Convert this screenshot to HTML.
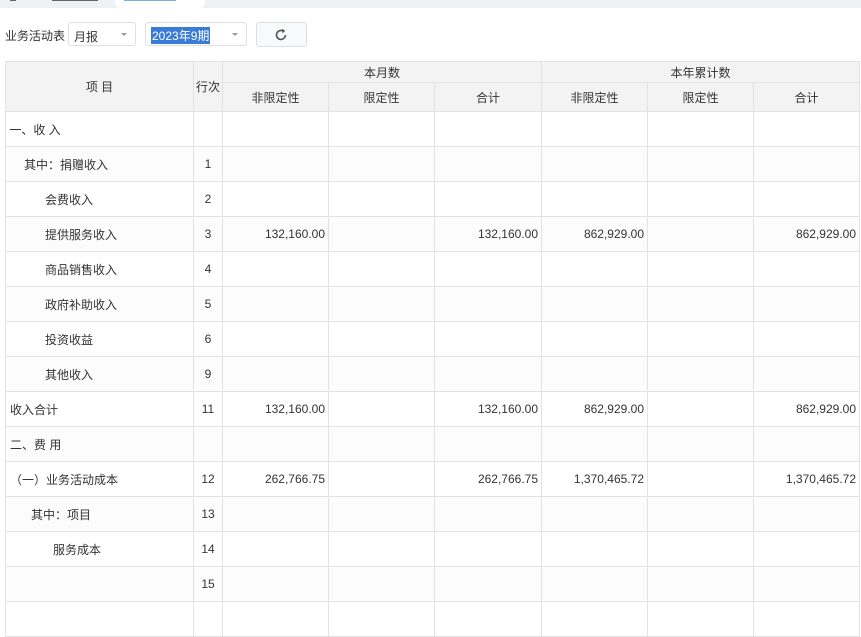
<!DOCTYPE html><html><head><meta charset="utf-8"><style>
body{margin:0;width:861px;height:605px;overflow:hidden;background:#fff;font-family:"Liberation Sans","Noto Sans CJK SC",sans-serif;font-size:12px;color:#333;position:relative}
.strip{position:absolute;left:0;top:0;width:861px;height:8px;background:#edf1f4}
.tab{position:absolute;left:115px;top:0;width:90px;height:8px;background:#fff;border-radius:0 0 6px 6px}
.tab2{position:absolute;left:0;top:0;width:113px;height:7px;background:#edf1f4;border-radius:0 0 6px 0}
.t1{position:absolute;left:10px;top:0;width:6px;height:1px;background:#666}
.t2{position:absolute;left:52px;top:0;width:46px;height:1px;background:#666}
.t3{position:absolute;left:124px;top:0;width:52px;height:1px;background:#7aaee8}
.lbl{position:absolute;left:5px;top:27px;font-size:12px}
.sel{position:absolute;top:22px;height:24px;border:1px solid #dcdfe6;border-radius:3px;box-sizing:border-box;background:#fff}
.sel span{position:absolute;left:5px;top:5px}
.sel i{position:absolute;right:8px;top:10px;border:3px solid transparent;border-top:3px solid #999;border-bottom:0}
.btn{position:absolute;left:256px;top:22px;width:51px;height:25px;border:1px solid #dcdfe6;border-radius:3px;box-sizing:border-box;background:#f7f9fb}
table{position:absolute;left:5px;top:61px;border-collapse:collapse;table-layout:fixed}
td{border:1px solid #e3e3e3;height:34px;padding:0;font-size:12px;white-space:nowrap}
.h td{background:#f3f3f3;text-align:center;height:20px}
tr.b td:nth-child(n+3){text-align:right;padding-right:3px}
tr.b td:nth-child(2){text-align:center}
tr.b:nth-child(even) td{background:#fcfcfc}
</style></head><body>
<div class="strip"></div><div class="tab2"></div><div class="tab"></div><div class="t1"></div><div class="t2"></div><div class="t3"></div>
<div class="lbl">业务活动表</div>
<div class="sel" style="left:68px;width:68px"><span>月报</span><i></i></div>
<div class="sel" style="left:145px;width:102px"><span style="background:#3b7bd8;color:#fff;top:4px;padding:0 1px">2023年9期</span><i></i></div>
<div class="btn"><svg width="14" height="14" viewBox="0 0 14 14" style="position:absolute;left:17px;top:5px"><path d="M11.5 7A4.5 4.5 0 1 1 9.2 3" fill="none" stroke="#555" stroke-width="1.6"/><path d="M8 0.8L11.2 2.8 8.6 5.4Z" fill="#555"/></svg></div>
<table>
<colgroup><col style="width:188px"><col style="width:29px"><col style="width:106px"><col style="width:106px"><col style="width:107px"><col style="width:106px"><col style="width:106px"><col style="width:106px"></colgroup>
<tr class="h"><td rowspan="2" style="height:49px">项 目</td><td rowspan="2">行次</td><td colspan="3">本月数</td><td colspan="3">本年累计数</td></tr>
<tr class="h"><td style="height:28px">非限定性</td><td>限定性</td><td>合计</td><td>非限定性</td><td>限定性</td><td>合计</td></tr>
<tr class="b"><td>&nbsp;一、收 入</td><td></td><td></td><td></td><td></td><td></td><td></td><td></td></tr>
<tr class="b"><td style="padding-left:18px">其中：捐赠收入</td><td>1</td><td></td><td></td><td></td><td></td><td></td><td></td></tr>
<tr class="b"><td style="padding-left:39px">会费收入</td><td>2</td><td></td><td></td><td></td><td></td><td></td><td></td></tr>
<tr class="b"><td style="padding-left:39px">提供服务收入</td><td>3</td><td>132,160.00</td><td></td><td>132,160.00</td><td>862,929.00</td><td></td><td>862,929.00</td></tr>
<tr class="b"><td style="padding-left:39px">商品销售收入</td><td>4</td><td></td><td></td><td></td><td></td><td></td><td></td></tr>
<tr class="b"><td style="padding-left:39px">政府补助收入</td><td>5</td><td></td><td></td><td></td><td></td><td></td><td></td></tr>
<tr class="b"><td style="padding-left:39px">投资收益</td><td>6</td><td></td><td></td><td></td><td></td><td></td><td></td></tr>
<tr class="b"><td style="padding-left:39px">其他收入</td><td>9</td><td></td><td></td><td></td><td></td><td></td><td></td></tr>
<tr class="b"><td style="padding-left:4px">收入合计</td><td>11</td><td>132,160.00</td><td></td><td>132,160.00</td><td>862,929.00</td><td></td><td>862,929.00</td></tr>
<tr class="b"><td style="padding-left:4px">二、费 用</td><td></td><td></td><td></td><td></td><td></td><td></td><td></td></tr>
<tr class="b"><td style="padding-left:4px">（一）业务活动成本</td><td>12</td><td>262,766.75</td><td></td><td>262,766.75</td><td>1,370,465.72</td><td></td><td>1,370,465.72</td></tr>
<tr class="b"><td style="padding-left:25px">其中：项目</td><td>13</td><td></td><td></td><td></td><td></td><td></td><td></td></tr>
<tr class="b"><td style="padding-left:47px">服务成本</td><td>14</td><td></td><td></td><td></td><td></td><td></td><td></td></tr>
<tr class="b"><td></td><td>15</td><td></td><td></td><td></td><td></td><td></td><td></td></tr>
<tr class="b"><td></td><td></td><td></td><td></td><td></td><td></td><td></td><td></td></tr>
</table>
</body></html>
